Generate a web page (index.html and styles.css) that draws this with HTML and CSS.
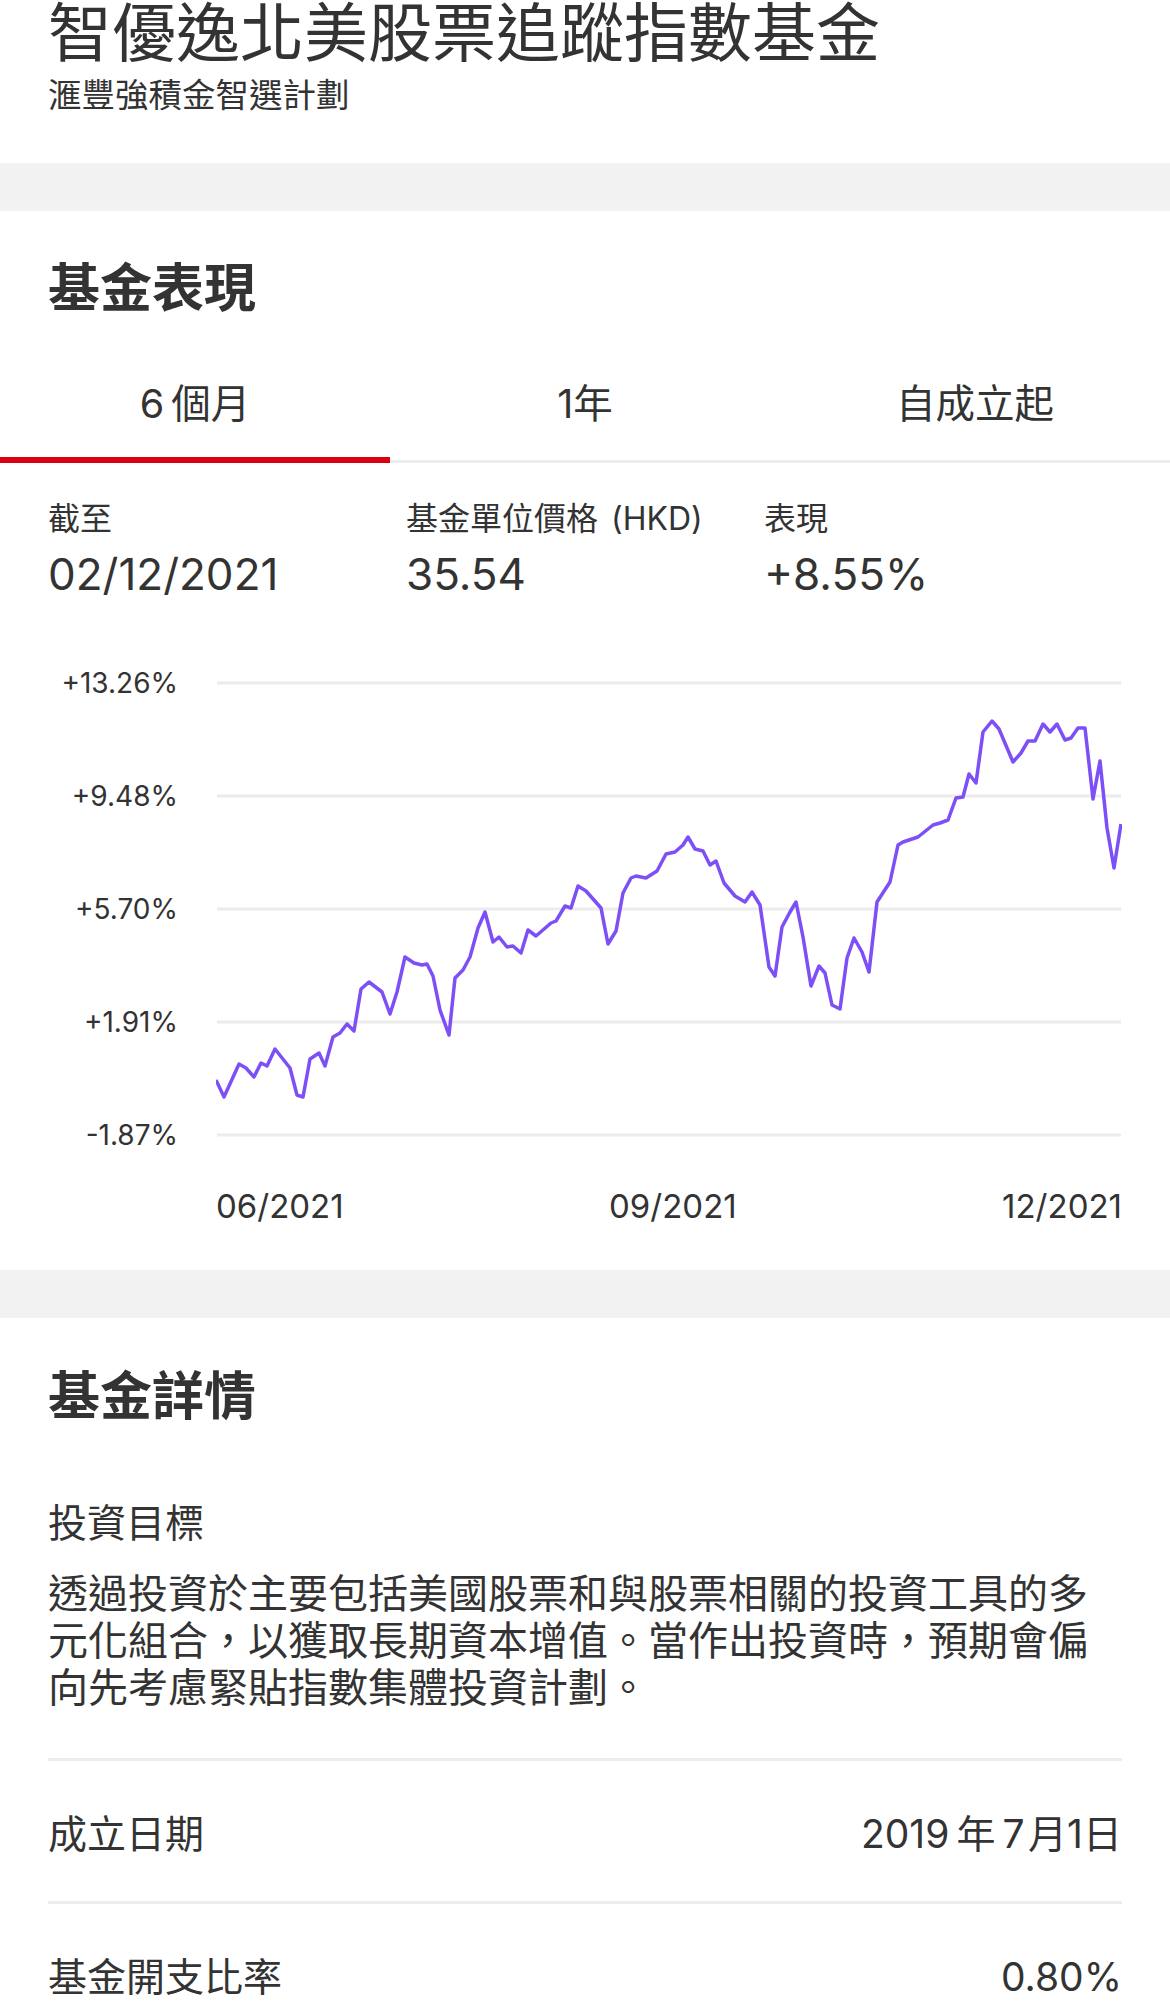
FILE: index.html
```html
<!DOCTYPE html>
<html lang="zh-Hant">
<head>
    <meta charset="utf-8">
    <title>智優逸北美股票追蹤指數基金</title>
    <link rel="stylesheet" href="styles.css">
</head>
<body>

<!-- Fund header -->
<header class="fund-header">
    <h1 class="fund-name">智優逸北美股票追蹤指數基金</h1>
    <p class="fund-plan">滙豐強積金智選計劃</p>
</header>

<div class="band"></div>

<!-- Performance -->
<section class="card">
    <h2 class="card-title">基金表現</h2>

    <div class="tabs">
        <div class="tab active">6&thinsp;個月</div>
        <div class="tab">1年</div>
        <div class="tab">自成立起</div>
    </div>

    <div class="stats">
        <div class="stat">
            <div class="stat-label">截至</div>
            <div class="stat-value">02/12/2021</div>
        </div>
        <div class="stat">
            <div class="stat-label">基金單位價格 (HKD)</div>
            <div class="stat-value">35.54</div>
        </div>
        <div class="stat">
            <div class="stat-label">表現</div>
            <div class="stat-value">+8.55%</div>
        </div>
    </div>

    <div class="chart">
        <div class="y-axis">
            <span>+13.26%</span>
            <span>+9.48%</span>
            <span>+5.70%</span>
            <span>+1.91%</span>
            <span>-1.87%</span>
        </div>
        <svg class="plot" width="906" height="482" viewBox="216 668 906 482">
            <g class="grid">
                <line x1="217" y1="683" x2="1121" y2="683"/>
                <line x1="217" y1="796" x2="1121" y2="796"/>
                <line x1="217" y1="909" x2="1121" y2="909"/>
                <line x1="217" y1="1022" x2="1121" y2="1022"/>
                <line x1="217" y1="1135" x2="1121" y2="1135"/>
            </g>
            <polyline class="line" points="216,1080 224,1097 239,1064 246,1068 254,1077 261,1063 267,1066 275,1049 290,1068 297,1095 303,1097 310,1059 319,1053 325,1066 333,1037 340,1033 347,1024 354,1031 361,989 369,982 382,992 390,1014 397,992 405,957 414,963 422,965 427,964 433,976 440,1010 449,1035 455,978 463,970 470,957 478,928 485,912 493,942 499,937 507,947 513,946 521,953 528,930 536,936 551,923 556,921 565,906 571,908 578,886 586,891 601,908 608,944 616,931 623,893 631,878 636,876 646,878 657,871 666,854 675,852 683,845 688,837 695,849 703,851 710,865 716,861 724,883 735,896 745,902 752,892 760,905 769,967 775,976 782,927 790,912 796,902 803,937 811,986 819,966 825,973 832,1005 840,1009 847,958 854,938 862,952 869,972 877,902 890,882 898,845 903,842 918,837 933,825 940,823 948,820 956,798 963,797 969,774 976,783 983,732 992,721 999,729 1013,762 1021,753 1028,741 1035,741 1043,724 1050,732 1057,724 1065,740 1071,738 1078,728 1085,728 1093,799 1100,761 1107,828 1114,868 1121,824"/>
        </svg>
        <div class="x-axis">
            <span>06/2021</span>
            <span>09/2021</span>
            <span>12/2021</span>
        </div>
    </div>
</section>

<div class="band"></div>

<!-- Details -->
<section class="card details">
    <h2 class="card-title">基金詳情</h2>

    <h3 class="detail-label">投資目標</h3>
    <p class="objective">透過投資於主要包括美國股票和與股票相關的投資工具的多元化組合，以獲取長期資本增值。當作出投資時，預期會偏向先考慮緊貼指數集體投資計劃。</p>

    <div class="detail-row">
        <span class="detail-label">成立日期</span>
        <span class="detail-value">2019&thinsp;年&thinsp;7&hairsp;月1日</span>
    </div>
    <div class="detail-row">
        <span class="detail-label">基金開支比率</span>
        <span class="detail-value">0.80%</span>
    </div>
</section>

</body>
</html>
```

FILE: styles.css
```css
/* Basic styling */
body {
    margin: 0;
    font-family: Inter, "Noto Sans CJK TC", sans-serif;
    color: #333;
    background: #fff;
}
h1, h2, h3, p {
    margin: 0;
    font-weight: normal;
}

/* Header */
.fund-header {
    padding: 0 48px 48px;
}
.fund-name {
    font-size: 64px;
    line-height: 66px;
    white-space: nowrap;
}
.fund-plan {
    margin-top: 9px;
    font-size: 33.5px;
    line-height: 40px;
}

.band {
    height: 48px;
    background: #f2f2f2;
}

/* Cards */
.card {
    padding: 48px 0 46px;
}
.card-title {
    padding: 0 48px;
    font-size: 52px;
    line-height: 60px;
    font-weight: bold;
}

/* Tabs */
.tabs {
    display: flex;
    margin-top: 62px;
}
.tab {
    flex: 1;
    text-align: center;
    font-size: 39.5px;
    line-height: 46px;
    padding-bottom: 33px;
    border-bottom: 3px solid #ececec;
}
.tab.active {
    padding-bottom: 30px;
    border-bottom: 6px solid #db0011;
}

/* Stats */
.stats {
    display: grid;
    grid-template-columns: repeat(3, 1fr);
    padding: 0 48px;
    margin-top: 36px;
}
.stat-label {
    font-size: 32px;
    line-height: 40px;
    word-spacing: 4px;
}
.stat-value {
    margin-top: 9px;
    font-size: 44px;
    line-height: 52px;
}

/* Chart */
.chart {
    display: grid;
    grid-template-columns: 168px 906px;
    padding: 0 48px;
    margin-top: 68px;
}
.y-axis {
    display: flex;
    flex-direction: column;
    justify-content: space-between;
    align-items: flex-end;
    padding-right: 38px;
    font-size: 28px;
    line-height: 30px;
}
.plot {
    display: block;
}
.grid line {
    stroke: #ececec;
    stroke-width: 3;
}
.line {
    fill: none;
    stroke: #7d4ff7;
    stroke-width: 3.5;
    stroke-linejoin: round;
}
.x-axis {
    grid-column: 2;
    display: flex;
    justify-content: space-between;
    margin-top: 38px;
    font-size: 33px;
    line-height: 36px;
}

/* Details */
.details {
    padding: 49px 48px 0;
}
.details .card-title {
    padding: 0;
}
.detail-label {
    font-size: 39px;
    line-height: 48px;
}
h3.detail-label {
    margin-top: 72px;
}
.objective {
    margin-top: 23px;
    font-size: 40px;
    line-height: 47px;
    padding-bottom: 47px;
    border-bottom: 3px solid #ececec;
}
.detail-row {
    display: flex;
    justify-content: space-between;
    align-items: center;
    padding: 49px 0 43px;
    border-bottom: 3px solid #ececec;
}
.detail-value {
    font-size: 39px;
    line-height: 48px;
}
```
